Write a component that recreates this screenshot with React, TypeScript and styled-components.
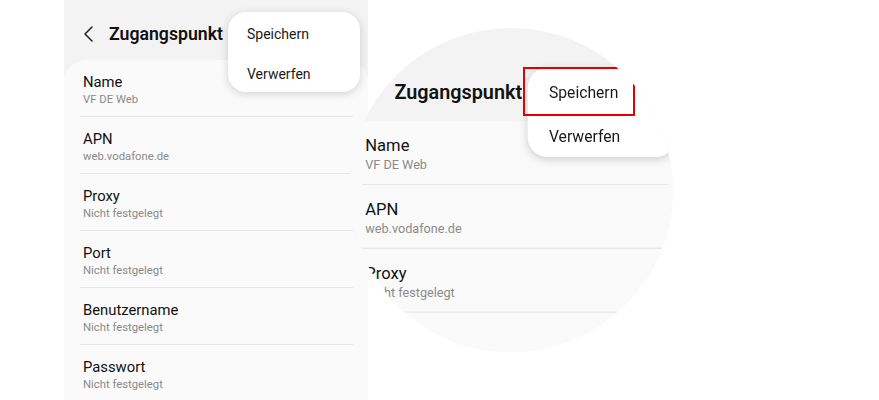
import React from 'react';
import styled, { createGlobalStyle } from 'styled-components';

const GlobalStyle = createGlobalStyle`
  html, body { margin: 0; padding: 0; background: #ffffff; }
  body { font-family: Roboto, "Noto Sans", Arial, sans-serif; -webkit-font-smoothing: antialiased; }
`;

const Page = styled.div`
  position: relative;
  width: 879px;
  height: 400px;
  overflow: hidden;
  display: flex;
  padding-left: 64px;
  box-sizing: border-box;
  background: #ffffff;
`;

const PhonePanel = styled.div`
  flex: none;
  width: 304px;
  height: 400px;
  overflow: hidden;
`;

const ScreenRoot = styled.div`
  position: relative;
  width: 304px;
  height: 420px;
  background: #f3f3f3;
  display: flex;
  flex-direction: column;
`;

const Header = styled.div`
  flex: none;
  height: 60px;
  box-sizing: border-box;
  padding: 8px 0 0 20px;
  display: flex;
  align-items: center;
  gap: 16px;
`;

const Title = styled.div`
  font-size: 17.7px;
  font-weight: 600;
  color: #111111;
`;

const Card = styled.div`
  flex: 1;
  background: #fafafa;
  border-radius: 22px 22px 0 0;
  padding: 0 15px 0 16px;
`;

const Row = styled.div`
  padding: 14px 0 9px 3px;
  border-bottom: 1px solid #e7e7e7;
  display: flex;
  flex-direction: column;
  gap: 1px;
`;

const RowTitle = styled.div`
  font-size: 14.8px;
  line-height: 17px;
  color: #111111;
`;

const RowSub = styled.div`
  font-size: 11.3px;
  line-height: 15px;
  color: #8a8a8a;
`;

const Menu = styled.div`
  position: absolute;
  left: 164px;
  top: 12px;
  width: 132px;
  height: 80px;
  background: #ffffff;
  border-radius: 18px;
  box-shadow: 0 2px 8px rgba(0, 0, 0, 0.16);
  display: flex;
  flex-direction: column;
  padding-top: 2px;
  box-sizing: border-box;
`;

const MenuItem = styled.div`
  height: 40px;
  flex: none;
  display: flex;
  align-items: center;
  padding-left: 19px;
  font-size: 14px;
  color: #1a1a1a;
`;

const Lens = styled.div`
  position: absolute;
  left: 349px;
  top: 28px;
  width: 324px;
  height: 324px;
  border-radius: 50%;
  overflow: hidden;
  background: #f3f3f3;
`;

const Magnified = styled.div<{ $zoom: number }>`
  position: absolute;
  left: -5px;
  top: 26px;
  transform: scale(${p => p.$zoom});
  transform-origin: 0 0;
`;

const Highlight = styled.div`
  position: absolute;
  left: 174px;
  top: 39px;
  width: 112px;
  height: 49px;
  box-sizing: border-box;
  border: 2px solid #e00000;
`;

const rows = [
  { t: 'Name', s: 'VF DE Web' },
  { t: 'APN', s: 'web.vodafone.de' },
  { t: 'Proxy', s: 'Nicht festgelegt' },
  { t: 'Port', s: 'Nicht festgelegt' },
  { t: 'Benutzername', s: 'Nicht festgelegt' },
  { t: 'Passwort', s: 'Nicht festgelegt' },
];

function Screen() {
  return (
    <ScreenRoot>
      <Header>
        <svg width="9" height="16" viewBox="0 0 9 16">
          <polyline points="8,1 1,8 8,15" fill="none" stroke="#222" strokeWidth="1.5" strokeLinejoin="round" strokeLinecap="round" />
        </svg>
        <Title>Zugangspunkt</Title>
      </Header>
      <Card>
        {rows.map(r => (
          <Row key={r.t}>
            <RowTitle>{r.t}</RowTitle>
            <RowSub>{r.s}</RowSub>
          </Row>
        ))}
      </Card>
      <Menu>
        <MenuItem>Speichern</MenuItem>
        <MenuItem>Verwerfen</MenuItem>
      </Menu>
    </ScreenRoot>
  );
}

export default function App() {
  return (
    <>
      <GlobalStyle />
      <Page>
        <PhonePanel>
          <Screen />
        </PhonePanel>
        <Lens>
          <Magnified $zoom={1.12}>
            <Screen />
          </Magnified>
          <Highlight />
        </Lens>
      </Page>
    </>
  );
}
